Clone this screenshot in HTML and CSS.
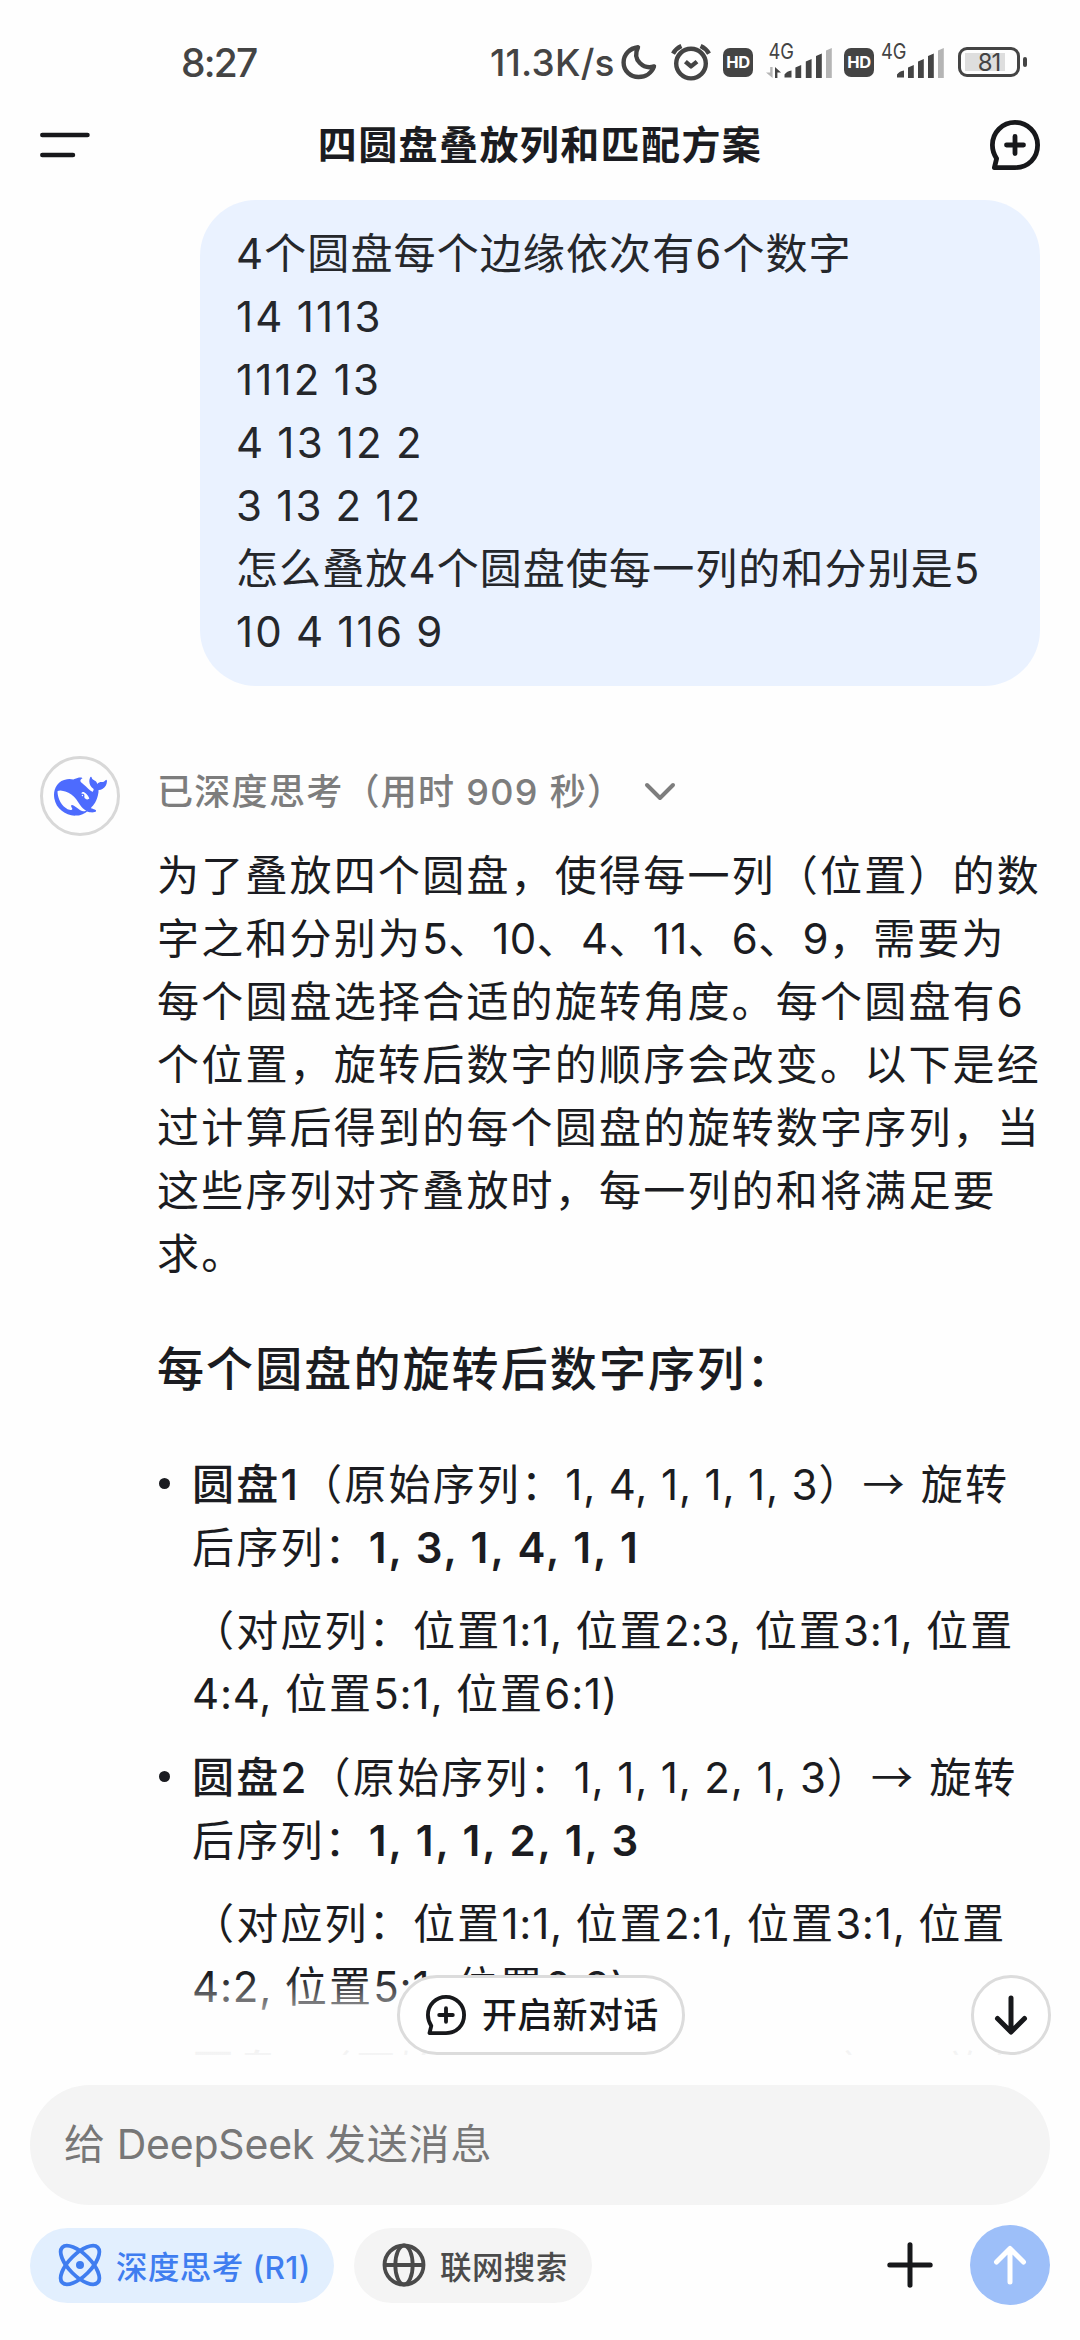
FILE: index.html
```html
<!DOCTYPE html>
<html lang="zh-CN">
<head>
<meta charset="utf-8">
<title>四圆盘叠放列和匹配方案</title>
<link rel="stylesheet" href="styles.css">
</head>
<body>
<svg class="defs" width="0" height="0">
  <symbol id="new-chat" viewBox="0 0 50 50">
    <path d="M4.4 47.6 H25 C38.5 47.6 47.6 37.8 47.6 25 C47.6 12.4 37.6 2.4 25 2.4 C12.4 2.4 2.4 12.4 2.4 25 C2.4 30.6 4 34.6 6.6 38.6 Z M25 16.5 V33.5 M16.5 25 H33.5" fill="none" stroke="currentColor" stroke-width="4.8" stroke-linecap="round" stroke-linejoin="round"/>
  </symbol>
</svg>
<div class="phone">
  <div class="status">
    <span class="clock">8:27</span>
    <span class="speed">11.3K/s</span>
    <svg class="moon" width="36" height="36" viewBox="0 0 36 36"><path d="M17 3.2 C8.5 4.2 2.6 10.6 2.6 18.4 C2.6 26.8 9.3 33 17.6 33 C24.6 33 30.6 28.8 33 22.4 C23 25.6 10.6 16.4 17 3.2 Z"/></svg>
    <svg class="alarm" width="40" height="37" viewBox="0 0 40 37"><circle cx="20" cy="19.6" r="14.8"/><path d="M14.4 17.6 L20 22.4 L26 17.6"/><path d="M2 9.6 Q5 4.4 10.4 2 M38 9.6 Q35 4.4 29.6 2"/></svg>
    <span class="hd">HD</span>
    <svg class="signal one" width="66" height="36" viewBox="0 0 66 36">
      <text x="2.4" y="16.4" textLength="25.5" lengthAdjust="spacingAndGlyphs">4G</text>
      <path class="dim" d="M0 29.5 H4.2 V24 H6.6 V35 Z"/><path d="M9 24 L15 29.5 H11.4 V35 H9 Z"/>
      <path d="M18.5 34.5 V31.5 Q21 28 25.5 27.5 V34.5 Z M29.4 35 V24.5 L35.2 22 V35 Z M39.8 35 V18.5 L45.6 16 V35 Z M50 35 V13 L55.8 10.5 V35 Z"/><path class="dim" d="M60 35 V7.5 L65.8 5 V35 Z"/>
    </svg>
    <span class="hd">HD</span>
    <svg class="signal two" width="64" height="36" viewBox="0 0 64 36">
      <text x="0" y="16.4" textLength="25.5" lengthAdjust="spacingAndGlyphs">4G</text>
      <path d="M16 34.5 V31.5 Q18.5 28 23 27.5 V34.5 Z M27 35 V24.5 L32.8 22 V35 Z M37 35 V18.5 L42.8 16 V35 Z M47 35 V13 L52.8 10.5 V35 Z"/><path class="dim" d="M57 35 V7.5 L62.8 5 V35 Z"/>
    </svg>
    <span class="battery"><span class="level">81</span></span><i class="nub"></i>
  </div>

  <header class="header">
    <svg class="menu" width="50" height="26" viewBox="0 0 50 26"><path d="M2.3 3 H47.5 M2.3 23 H33"/></svg>
    <h1>四圆盘叠放列和匹配方案</h1>
    <svg class="compose" width="50" height="50"><use href="#new-chat"/></svg>
  </header>

  <main class="chat">
    <div class="bubble">
      <p>4个圆盘每个边缘依次有6个数字</p>
      <p class="digits">14 1113</p>
      <p class="digits">1112 13</p>
      <p class="digits">4 13 12 2</p>
      <p class="digits">3 13 2 12</p>
      <p>怎么叠放4个圆盘使每一列的和分别是5</p>
      <p class="digits">10 4 116 9</p>
    </div>

    <div class="reply">
      <div class="avatar">
        <svg width="53" height="53" viewBox="0 0 24 24"><path d="M23.748 4.482c-.254-.124-.364.113-.512.234-.051.039-.094.09-.137.136-.372.397-.806.657-1.373.626-.829-.046-1.537.214-2.163.848-.133-.782-.575-1.248-1.247-1.548-.352-.156-.708-.311-.955-.65-.172-.241-.219-.51-.305-.774-.055-.16-.11-.323-.293-.35-.2-.031-.278.136-.356.276-.313.572-.434 1.202-.422 1.84.027 1.436.633 2.58 1.838 3.393.137.093.172.187.129.323-.082.28-.18.552-.266.833-.055.179-.137.217-.329.14a5.526 5.526 0 01-1.736-1.18c-.857-.828-1.631-1.742-2.597-2.458a11.365 11.365 0 00-.689-.471c-.985-.957.13-1.743.388-1.836.27-.098.093-.432-.779-.428-.872.004-1.67.295-2.687.684a3.055 3.055 0 01-.465.137 9.597 9.597 0 00-2.883-.102c-1.885.21-3.39 1.102-4.497 2.623C.082 8.606-.231 10.684.152 12.85c.403 2.284 1.569 4.175 3.36 5.653 1.858 1.533 3.997 2.284 6.438 2.14 1.482-.085 3.133-.284 4.994-1.86.47.234.962.327 1.78.397.63.059 1.236-.03 1.705-.128.735-.156.684-.837.419-.961-2.155-1.004-1.682-.595-2.113-.926 1.096-1.296 2.746-2.642 3.392-7.003.05-.347.007-.565 0-.845-.004-.17.035-.237.23-.256a4.173 4.173 0 001.545-.475c1.396-.763 1.96-2.015 2.093-3.517.02-.23-.004-.467-.247-.588zM11.581 18c-2.089-1.642-3.102-2.183-3.52-2.16-.392.024-.321.471-.235.763.09.288.207.486.371.739.114.167.192.416-.113.603-.673.416-1.842-.14-1.897-.167-1.361-.802-2.5-1.86-3.301-3.307-.774-1.393-1.224-2.887-1.298-4.482-.02-.386.093-.522.477-.592a4.696 4.696 0 011.529-.039c2.132.312 3.946 1.265 5.468 2.774.868.86 1.525 1.887 2.202 2.891.72 1.066 1.494 2.082 2.48 2.914.348.292.625.514.891.677-.802.09-2.14.11-3.054-.614zm1-6.44a.306.306 0 01.415-.287.302.302 0 01.2.288.306.306 0 01-.31.307.303.303 0 01-.304-.308zm3.11 1.596c-.2.081-.399.151-.59.16a1.245 1.245 0 01-.798-.254c-.274-.23-.47-.358-.552-.758a1.73 1.73 0 01.016-.588c.07-.327-.008-.537-.239-.727-.187-.156-.426-.199-.688-.199a.559.559 0 01-.254-.078.253.253 0 01-.114-.358c.028-.054.16-.186.192-.21.356-.202.767-.136 1.146.016.352.144.618.408 1.001.782.391.451.462.576.685.914.176.265.336.537.445.848.067.195-.019.354-.25.452z"/></svg>
      </div>
      <div class="answer">
        <div class="thought"><span>已深度思考（用时 909 秒）</span><svg width="32" height="20" viewBox="0 0 32 20"><path d="M3 3 L16 16 L29 3"/></svg></div>
        <div class="para">
          <p>为了叠放四个圆盘，使得每一列（位置）的数</p>
          <p>字之和分别为<i class="num">5</i>、<i class="num">10</i>、<i class="num">4</i>、<i class="num">11</i>、<i class="num">6</i>、<i class="num">9</i>，需要为</p>
          <p>每个圆盘选择合适的旋转角度。每个圆盘有6</p>
          <p>个位置，旋转后数字的顺序会改变。以下是经</p>
          <p>过计算后得到的每个圆盘的旋转数字序列，当</p>
          <p>这些序列对齐叠放时，每一列的和将满足要</p>
          <p>求。</p>
        </div>
        <h2>每个圆盘的旋转后数字序列：</h2>
        <ul>
          <li>
            <p><b>圆盘1</b>（原始序列：<i class="list">1, 4, 1, 1, 1, 3</i>）<i class="arrow">→</i> 旋转</p>
            <p>后序列：<b class="seq">1, 3, 1, 4, 1, 1</b></p>
            <p class="cols">（对应列：位置<i class="pos">1:1, </i>位置<i class="pos">2:3, </i>位置<i class="pos">3:1, </i>位置</p>
            <p><i class="pos">4:4, </i>位置<i class="pos">5:1, </i>位置<i class="pos">6:1)</i></p>
          </li>
          <li>
            <p><b>圆盘2</b>（原始序列：<i class="list">1, 1, 1, 2, 1, 3</i>）<i class="arrow">→</i> 旋转</p>
            <p>后序列：<b class="seq">1, 1, 1, 2, 1, 3</b></p>
            <p class="cols">（对应列：位置<i class="pos">1:1, </i>位置<i class="pos">2:1, </i>位置<i class="pos">3:1, </i>位置</p>
            <p><i class="pos">4:2, </i>位置<i class="pos">5:1, </i>位置<i class="pos">6:3)</i></p>
          </li>
          <li>
            <p><b>圆盘3</b>（原始序列：<i class="list">4, 1, 3, 1, 2, 2</i>）<i class="arrow">→</i> 旋转</p>
          </li>
        </ul>
      </div>
    </div>
    <div class="fade"></div>
    <div class="floating">
      <div class="new-chat"><svg width="40" height="40"><use href="#new-chat"/></svg><span>开启新对话</span></div>
      <div class="to-bottom"><svg width="36" height="42" viewBox="0 0 36 42"><path d="M18 4 V37 M4.5 24.5 L18 38 L31.5 24.5"/></svg></div>
    </div>
  </main>

  <footer class="composer">
    <div class="input">给 <span>DeepSeek</span> 发送消息</div>
    <div class="tools">
      <div class="chip active">
        <svg width="44" height="44" viewBox="0 0 44 44"><g transform="translate(22 22)"><ellipse rx="25" ry="11" transform="rotate(45)"/><ellipse rx="25" ry="11" transform="rotate(-45)"/><circle r="4"/></g></svg>
        <span>深度思考 (R1)</span>
      </div>
      <div class="chip">
        <svg width="44" height="44" viewBox="0 0 44 44"><circle cx="22" cy="22" r="19.5"/><ellipse cx="22" cy="22" rx="8.7" ry="19.5"/><path d="M2.5 22 H41.5"/></svg>
        <span>联网搜索</span>
      </div>
      <svg class="plus" width="46" height="46" viewBox="0 0 46 46"><path d="M23 2.8 V43.2 M2.8 23 H43.2"/></svg>
      <div class="send"><svg width="36" height="42" viewBox="0 0 36 42"><path d="M18 38 V5 M4.5 18 L18 4.5 L31.5 18"/></svg></div>
    </div>
  </footer>
</div>
</body>
</html>
```
FILE: styles.css
```css
* { box-sizing: border-box; }
body, p, h1, h2, ul { margin: 0; padding: 0; }
body {
  background: #fefefe;
  color: #1b1c21;
  font-family: Inter, "Noto Sans CJK SC", sans-serif;
}
.defs { position: absolute; }
svg { display: block; flex: none; }
i { font-style: normal; }
.phone {
  width: 1080px;
  height: 2340px;
  display: flex;
  flex-direction: column;
  overflow: hidden;
}

/* status bar */
.status {
  height: 100px;
  padding: 24px 0 0 181px;
  display: flex;
  align-items: center;
  color: #444;
  white-space: nowrap;
}
.clock { width: 309px; font-size: 39px; font-weight: 450; letter-spacing: -1.8px; }
.speed { width: 131px; font-size: 37px; font-weight: 450; letter-spacing: 0.2px; }
.moon, .alarm { fill: none; stroke: #444; stroke-width: 4.4; stroke-linejoin: round; stroke-linecap: round; }
.alarm { margin-left: 14px; stroke-linecap: butt; }
.hd {
  width: 30px;
  height: 29px;
  margin-left: 12px;
  border-radius: 7px;
  background: #444;
  color: #fff;
  font-size: 16.5px;
  font-weight: 700;
  line-height: 29px;
  text-align: center;
  letter-spacing: -0.4px;
}
.signal { fill: #444; font-size: 22px; margin-bottom: 2px; overflow: visible; }
.signal .dim { fill: #b5b5b5; }
.signal.one { margin-left: 13px; }
.signal.two { margin-left: 7px; }
.battery {
  width: 62px;
  height: 30px;
  margin-left: 13px;
  padding: 3px 4px;
  border: 3px solid #444;
  border-radius: 9px;
}
.level {
  display: block;
  height: 18px;
  width: 48px;
  font-size: 24px;
  line-height: 19px;
  letter-spacing: -1px;
  text-align: center;
  background: linear-gradient(90deg, #dedede 40px, transparent 40px);
}
.nub { width: 4px; height: 10px; margin-left: 3px; border-radius: 2px; background: #444; }

/* title bar */
.header {
  height: 90px;
  padding: 0 40px;
  display: flex;
  align-items: center;
  justify-content: space-between;
}
.menu { fill: none; stroke: #17181b; stroke-width: 4.5; stroke-linecap: round; }
.header h1 { font-size: 39px; line-height: 50px; font-weight: 700; letter-spacing: 1.4px; }
.compose { color: #17181b; }

/* conversation */
.chat {
  position: relative;
  height: 1865px;
  padding: 10px 40px 0;
  overflow: hidden;
  font-size: 42px;
  line-height: 63px;
  white-space: nowrap;
}
.bubble {
  height: 486px;
  margin-left: 160px;
  padding: 22px 36px;
  border-radius: 56px;
  background: #eaf2ff;
  color: #25272b;
  letter-spacing: 1.1px;
}
.bubble .digits { letter-spacing: 2.2px; word-spacing: -2px; }
.bubble p, .answer p { height: 63px; }
.reply { display: flex; gap: 37px; margin-top: 70px; }
.avatar {
  width: 80px;
  height: 80px;
  display: flex;
  align-items: center;
  justify-content: center;
  flex: none;
  border: 3px solid #d8d8d8;
  border-radius: 50%;
}
.avatar svg { fill: #4d6bfe; }
.answer { letter-spacing: 2.2px; }
.thought {
  height: 72px;
  display: flex;
  align-items: center;
  gap: 20px;
  color: #7d7d7d;
  font-size: 36px;
  font-weight: 500;
  letter-spacing: 1.3px;
}
.thought svg { fill: none; stroke: #7d7d7d; stroke-width: 4; stroke-linecap: round; stroke-linejoin: round; }
.para { padding-top: 16px; }
.answer h2 {
  margin: 50px 0;
  font-size: 47px;
  line-height: 68px;
  font-weight: 500;
  letter-spacing: 2.1px;
}
.answer ul { list-style: none; }
.answer li { position: relative; padding-left: 35px; margin-bottom: 21px; }
.answer li::before {
  content: "";
  position: absolute;
  left: 2px;
  top: 25px;
  width: 11px;
  height: 11px;
  border-radius: 50%;
  background: #1b1c21;
}
.answer b { font-weight: 500; }
.answer .seq { font-weight: 600; letter-spacing: 2px; }
.answer .cols { margin-top: 20px; }
.num { letter-spacing: 0.4px; }
.list { letter-spacing: 0.85px; }
.pos { letter-spacing: 0.8px; }
.arrow { font-family: "Noto Sans CJK SC", sans-serif; line-height: 0; }

.fade {
  position: absolute;
  left: 0;
  right: 0;
  bottom: 0;
  height: 80px;
  background: linear-gradient(rgba(254,254,254,0), rgba(254,254,254,.9) 75%, rgba(254,254,254,.96));
}
.floating {
  position: absolute;
  left: 397px;
  right: 29px;
  bottom: 0;
  display: flex;
  justify-content: space-between;
}
.new-chat, .to-bottom {
  height: 80px;
  display: flex;
  align-items: center;
  background: #fff;
  border: 3px solid #dcdcdc;
  border-radius: 40px;
}
.new-chat { width: 288px; padding-left: 26px; gap: 16px; color: #17181b; font-size: 35px; font-weight: 500; letter-spacing: 0.3px; }
.to-bottom { width: 80px; justify-content: center; }
.to-bottom path, .send path { fill: none; stroke: #17181b; stroke-width: 5; stroke-linecap: round; stroke-linejoin: round; }

/* message composer */
.composer { padding: 30px 30px 0; }
.input {
  height: 120px;
  padding-left: 34px;
  border-radius: 60px;
  background: #f4f4f4;
  color: #777;
  font-size: 41px;
  line-height: 118px;
  letter-spacing: 0.8px;
  word-spacing: -1.5px;
}
.input span { letter-spacing: -0.2px; }
.tools { display: flex; align-items: center; height: 80px; margin-top: 20px; }
.chip {
  width: 238px;
  height: 75px;
  display: flex;
  align-items: center;
  padding-left: 28px;
  gap: 14px;
  border-radius: 38px;
  background: #f4f4f4;
  color: #4a4a4a;
  font-size: 31.5px;
  font-weight: 500;
  letter-spacing: 0.4px;
  white-space: nowrap;
}
.chip svg { fill: none; stroke: currentColor; stroke-width: 3.8; }
.chip.active { width: 304px; margin-right: 20px; background: #e2effe; color: #3f7df0; }
.chip.active circle { fill: currentColor; stroke: none; }
.plus { margin: 0 37px 0 auto; stroke: #17181b; stroke-width: 5; stroke-linecap: round; }
.send {
  width: 80px;
  height: 80px;
  display: flex;
  align-items: center;
  justify-content: center;
  border-radius: 50%;
  background: #9dbff9;
}
.send path { stroke: #fff; }
```
